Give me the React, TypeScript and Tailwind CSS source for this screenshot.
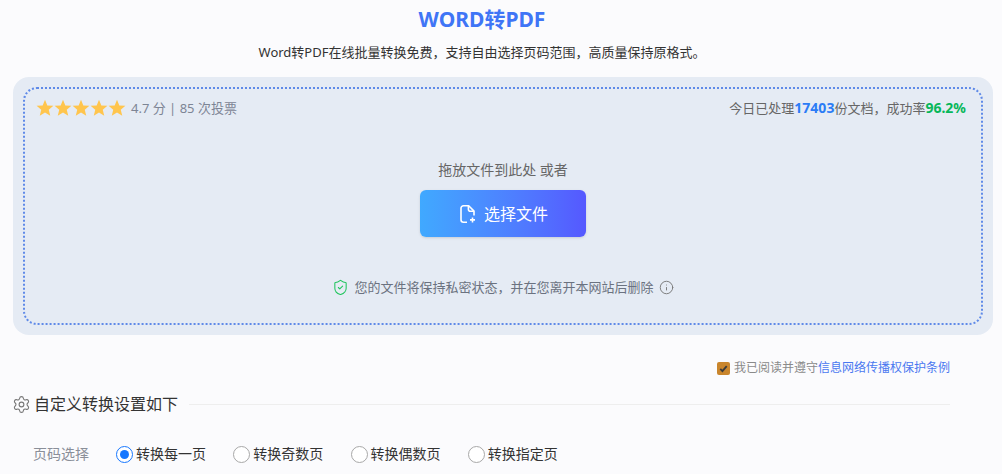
import { Info, Settings, ShieldCheck } from 'lucide-react';

const font = "font-['Noto_Sans','Noto_Sans_CJK_SC',sans-serif]";

const Star = () => (
  <svg viewBox="0 0 24 24" className="h-[18px] w-[18px] fill-[#ffc54d]" aria-hidden="true">
    <path d="M12 1l3.100 7.500 8.100.6-6.200 5.200 2 7.900-7-4.300-7 4.300 2-7.900L.8 9.100l8.100-.6z" />
  </svg>
);

const FileAdd = () => (
  <svg viewBox="0 0 20 20" className="h-5 w-5 fill-none stroke-white stroke-[1.6]" aria-hidden="true">
    <path d="M9 18.200H5.500a2.500 2.500 0 0 1-2.500-2.500V4.300a2.500 2.500 0 0 1 2.500-2.500h5.200l5.300 5.300v4.400" strokeLinejoin="round" />
    <path d="M10.400 2v3.300a2 2 0 0 0 2 2h3.400" />
    <path d="M14.500 13.400v5M12 15.900h5" />
  </svg>
);

const Radio = ({ label, checked }: { label: string; checked?: boolean }) => (
  <label className="flex items-center gap-[3px]">
    {checked ? (
      <span className="flex h-[17px] w-[17px] items-center justify-center rounded-full border border-[#1677ff] bg-white">
        <span className="h-[9px] w-[9px] rounded-full bg-[#1677ff]" />
      </span>
    ) : (
      <span className="h-[17px] w-[17px] rounded-full border border-[#a8a8a8] bg-white" />
    )}
    <span className="text-[14px] leading-5 text-[#333]">{label}</span>
  </label>
);

const App = () => (
  <div className={`h-[474px] w-[1002px] overflow-hidden bg-[#fbfbfd] ${font}`}>
    <header className="w-[964px] pt-[6px] text-center">
      <h1 className="text-[21px] font-bold leading-[26px] text-[#3f75f6]">WORD转PDF</h1>
      <p className="mt-[7px] text-[13px] leading-[26px] text-[#333]">
        Word转PDF在线批量转换免费，支持自由选择页码范围，高质量保持原格式。
      </p>
    </header>

    <section className="mx-[13px] mt-[12px] h-[258px] w-[980px] rounded-2xl bg-[#e5ebf4] p-[10px]">
      <div className="flex h-full flex-col rounded-[14px] border-2 border-dotted border-[#5f8ae8] px-[13px]">
        <div className="-ml-[2px] mr-[2px] mt-[9px] flex items-center justify-between">
          <div className="flex items-center">
            <div className="flex">
              <Star />
              <Star />
              <Star />
              <Star />
              <Star />
            </div>
            <span className="ml-[5px] text-[13px] leading-5 text-[#7d8595]">4.7 分 | 85 次投票</span>
          </div>
          <div className="text-[13px] leading-5 text-[#666]">
            今日已处理<b className="text-[14px] text-[#2b7cf6]">17403</b>份文档，成功率<b className="text-[14px] text-[#07b75a]">96.2%</b>
          </div>
        </div>

        <p className="mt-[42px] text-center text-[14px] leading-5 text-[#666]">拖放文件到此处 或者</p>
        <button className="mx-auto mt-[10px] flex h-[47px] w-[166px] items-center justify-center gap-[6px] rounded-md bg-gradient-to-r from-[#40a9ff] to-[#5558ff] text-[16px] text-white shadow-sm">
          <FileAdd />
          选择文件
        </button>

        <div className="mt-[40px] flex items-center justify-center text-[13px] leading-5 text-[#6b7280]">
          <ShieldCheck className="mr-[5px] h-[17px] w-[17px] text-[#22c55e]" strokeWidth={1.5} />
          您的文件将保持私密状态，并在您离开本网站后删除
          <Info className="ml-[5px] h-[15px] w-[15px] text-[#777]" strokeWidth={1.5} />
        </div>
      </div>
    </section>

    <div className="mt-[23px] flex w-[950px] items-center justify-end text-[12px] leading-5">
      <span className="mr-[4px] flex h-[13px] w-[13px] items-center justify-center rounded-[2px] bg-[#c9852c]">
        <svg viewBox="0 0 12 12" className="h-[11px] w-[11px] fill-none stroke-[#3a3a3a] stroke-2" aria-hidden="true">
          <path d="M2.500 6.500l2.300 2.300 4.700-5.300" />
        </svg>
      </span>
      <span className="text-[#8a8a8a]">我已阅读并遵守</span>
      <a className="text-[#4a78f0]">信息网络传播权保护条例</a>
    </div>

    <div className="mt-[16px] flex w-[950px] items-center pl-[12px]">
      <Settings className="mr-[3px] h-[19px] w-[19px] text-[#777]" strokeWidth={1.4} />
      <span className="text-[16px] leading-5 text-[#333]">自定义转换设置如下</span>
      <div className="ml-[11px] h-px flex-1 bg-[#eeeeee]" />
    </div>

    <div className="mt-[30px] flex items-center pl-[33px]">
      <span className="w-[83px] text-[14px] leading-5 text-[#8a8f99]">页码选择</span>
      <div className="flex gap-[27.25px]">
        <Radio label="转换每一页" checked />
        <Radio label="转换奇数页" />
        <Radio label="转换偶数页" />
        <Radio label="转换指定页" />
      </div>
    </div>
  </div>
);

export default App;
